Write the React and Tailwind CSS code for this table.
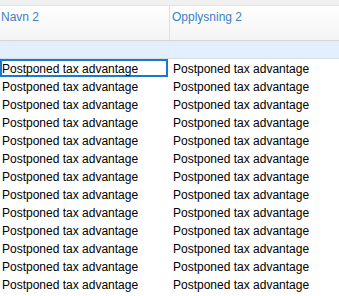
const rows = Array.from({ length: 13 }, () => ({
  name: "Postponed tax advantage",
  info: "Postponed tax advantage",
}));

export default function App() {
  return (
    <div className="h-[296px] w-[339px] overflow-hidden bg-white font-['Liberation_Sans',sans-serif] text-[12px] text-black">
      <div className="h-[6px] border-b border-[#e3e3e3] bg-[#f0f0f0]" />
      <div className="flex h-[35px] border-b border-[#d5d5d5] bg-gradient-to-b from-white to-[#f4f4f4]">
        <div className="w-[170px] border-r border-[#e0e0e0] pl-[1px] pt-[3px] leading-[16px] text-[#3d7fc4]">Navn 2</div>
        <div className="flex-1 pl-[2px] pt-[3px] leading-[16px] text-[#3d7fc4]">Opplysning 2</div>
      </div>
      <div className="h-[18px] border-b border-[#d6dde6] bg-[#e3effd]" />
      {rows.map((row, i) => (
        <div key={i} className="flex h-[18px] leading-[16px]">
          <div className={i === 0 ? "mr-[2px] w-[168px] border-2 border-[#1a78d2]" : "w-[170px] pl-[2px] pt-[2px]"}>
            {row.name}
          </div>
          <div className="flex-1 pl-[3px] pt-[2px]">{row.info}</div>
        </div>
      ))}
    </div>
  );
}
